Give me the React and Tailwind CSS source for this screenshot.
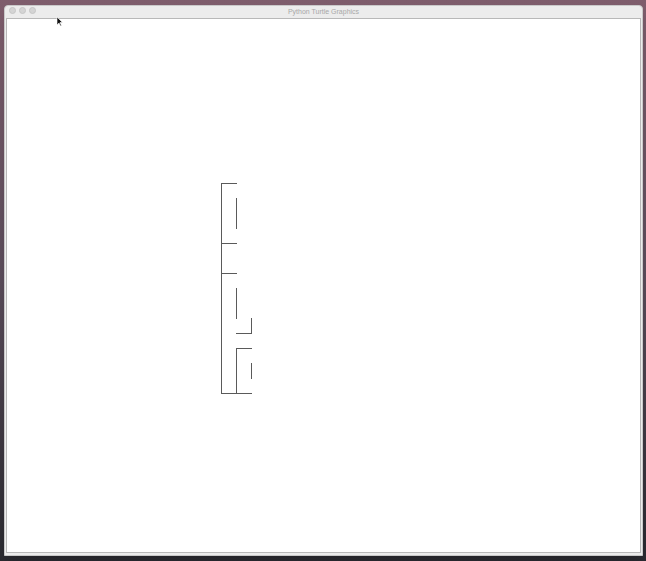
import React from 'react'

// turtle path segments, page coordinates
const segments = [
    [221, 183, 221, 393],
    [221, 183, 236, 183],
    [236, 198, 236, 228],
    [221, 243, 236, 243],
    [221, 273, 236, 273],
    [236, 288, 236, 318],
    [251, 318, 251, 333],
    [236, 333, 251, 333],
    [236, 348, 251, 348],
    [236, 348, 236, 393],
    [251, 363, 251, 378],
    [221, 393, 251, 393],
]

const App = () => {
    return (
        <div className="relative w-[646px] h-[561px] overflow-hidden bg-gradient-to-b from-[#7e5d6c] via-[#5a4c5a] to-[#2a2a30] pt-[5px] pl-[4px]">
            {/* Window */}
            <div className="w-[639px] h-[551px] flex flex-col bg-[#ececec] border border-[#c9c9c9] rounded-t-[4px] shadow-lg">
                {/* Title bar */}
                <div className="relative h-[12px] flex items-center justify-center">
                    <div className="absolute left-[4px] top-[1px] flex gap-[3px]">
                        <span className="w-[7px] h-[7px] rounded-full bg-[#d4d4d4] border border-[#c6c6c6]" />
                        <span className="w-[7px] h-[7px] rounded-full bg-[#d4d4d4] border border-[#c6c6c6]" />
                        <span className="w-[7px] h-[7px] rounded-full bg-[#d4d4d4] border border-[#c6c6c6]" />
                    </div>
                    <span className="-mt-[2px] text-[7px] leading-none text-[#a8a8a8] font-['Liberation_Sans',sans-serif]">
                        Python Turtle Graphics
                    </span>
                </div>

                {/* Canvas */}
                <div className="flex-1 px-[1px] pb-[2px]">
                    <div className="w-full h-full bg-white border border-[#b8b8b8]" />
                </div>
            </div>

            {/* Turtle drawing */}
            <svg className="absolute inset-0" width="646" height="561" viewBox="0 0 646 561">
                {segments.map(([x1, y1, x2, y2], i) => (
                    <line key={i} x1={x1 + 0.5} y1={y1 + 0.5} x2={x2 + 0.5} y2={y2 + 0.5} stroke="#5a5a5a" strokeWidth="1" strokeLinecap="square" />
                ))}
                {/* mouse pointer */}
                <path d="M57 17 L57 25 L59 23 L60.5 26 L61.5 25.5 L60 22.5 L62.5 22.5 Z" fill="#111" stroke="#fff" strokeWidth="0.6" />
            </svg>
        </div>
    )
}

export default App
